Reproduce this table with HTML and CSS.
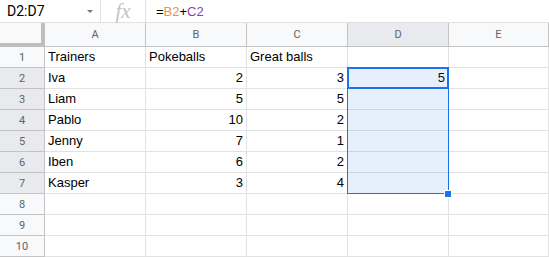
FILE: index.html
```html
<!DOCTYPE html>
<html>
<head>
<meta charset="utf-8">
<link rel="stylesheet" href="styles.css">
</head>
<body>
<div class="app">
  <div class="fbar">
    <div class="namebox"><span class="name">D2:D7</span><span class="caret"></span></div>
    <div class="sep"></div>
    <div class="fx">fx</div>
    <div class="sep"></div>
    <div class="formula">=<span class="ref1">B2</span>+<span class="ref2">C2</span></div>
  </div>
  <div class="sheet">
    <div class="corner"></div>
    <div class="ch">A</div><div class="ch">B</div><div class="ch">C</div><div class="ch sel">D</div><div class="ch">E</div>

    <div class="rh">1</div><div class="c">Trainers</div><div class="c">Pokeballs</div><div class="c">Great balls</div><div class="c"></div><div class="c"></div>
    <div class="rh sel">2</div><div class="c">Iva</div><div class="c n">2</div><div class="c n">3</div><div class="c n">5</div><div class="c"></div>
    <div class="rh sel">3</div><div class="c">Liam</div><div class="c n">5</div><div class="c n">5</div><div class="c"></div><div class="c"></div>
    <div class="rh sel">4</div><div class="c">Pablo</div><div class="c n">10</div><div class="c n">2</div><div class="c"></div><div class="c"></div>
    <div class="rh sel">5</div><div class="c">Jenny</div><div class="c n">7</div><div class="c n">1</div><div class="c"></div><div class="c"></div>
    <div class="rh sel">6</div><div class="c">Iben</div><div class="c n">6</div><div class="c n">2</div><div class="c"></div><div class="c"></div>
    <div class="rh sel">7</div><div class="c">Kasper</div><div class="c n">3</div><div class="c n">4</div><div class="c"></div><div class="c"></div>
    <div class="rh">8</div><div class="c"></div><div class="c"></div><div class="c"></div><div class="c"></div><div class="c"></div>
    <div class="rh">9</div><div class="c"></div><div class="c"></div><div class="c"></div><div class="c"></div><div class="c"></div>
    <div class="rh">10</div><div class="c"></div><div class="c"></div><div class="c"></div><div class="c"></div><div class="c"></div>

    <div class="range"></div>
    <div class="active"></div>
    <div class="handle"></div>
  </div>
</div>
</body>
</html>
```
FILE: styles.css
```css
html, body {
  margin: 0;
  padding: 0;
  background: #fff;
  overflow: hidden;
}
.app {
  width: 549px;
  height: 257px;
  font-family: "Liberation Sans", Arial, sans-serif;
  overflow: hidden;
}
.fbar {
  height: 22px;
  border-bottom: 1px solid #e1e1e1;
  display: flex;
  align-items: center;
  font-family: Roboto, "Liberation Sans", sans-serif;
  font-size: 14px;
  color: #000;
}
.namebox {
  width: 100px;
  box-sizing: border-box;
  padding-left: 7px;
  padding-right: 7px;
  display: flex;
  align-items: center;
  justify-content: space-between;
}
.caret {
  width: 0;
  height: 0;
  border-left: 3px solid transparent;
  border-right: 3px solid transparent;
  border-top: 3px solid #777;
  margin-top: 1px;
}
.sep {
  width: 1px;
  height: 22px;
  background: #e1e1e1;
}
.fx {
  width: 44px;
  height: 22px;
  display: flex;
  align-items: center;
  justify-content: center;
  font-family: "Liberation Serif", serif;
  font-style: italic;
  font-size: 21px;
  line-height: 1;
  color: #c4c4c4;
}
.formula {
  padding-left: 10px;
  font-family: "Liberation Sans", Arial, sans-serif;
  font-size: 13px;
}
.ref1 { color: #f0962d; }
.ref2 { color: #8e3fb2; }

.sheet {
  position: relative;
  display: grid;
  grid-template-columns: 45px 101px 101px 101px 101px 100px;
  grid-template-rows: 24px repeat(10, 21px);
}
.corner {
  background: #f8f9fa;
  border-right: 4px solid #bfbfbf;
  border-bottom: 4px solid #bfbfbf;
  box-sizing: border-box;
}
.ch {
  background: #f8f9fa;
  border-right: 1px solid #c4c4c4;
  border-bottom: 1px solid #c4c4c4;
  box-sizing: border-box;
  display: flex;
  align-items: center;
  justify-content: center;
  font-family: Roboto, "Liberation Sans", sans-serif;
  font-size: 11px;
  color: #5f6368;
}
.rh {
  background: #f8f9fa;
  border-right: 1px solid #c4c4c4;
  border-bottom: 1px solid #c4c4c4;
  box-sizing: border-box;
  display: flex;
  align-items: center;
  justify-content: center;
  font-family: Roboto, "Liberation Sans", sans-serif;
  font-size: 11px;
  color: #5f6368;
}
.ch.sel, .rh.sel {
  background: #e8eaed;
}
.c {
  border-right: 1px solid #e2e2e2;
  border-bottom: 1px solid #e2e2e2;
  box-sizing: border-box;
  font-size: 13px;
  color: #000;
  padding: 0 3px 3px 3px;
  display: flex;
  align-items: flex-end;
  white-space: nowrap;
  overflow: visible;
}
.c.n {
  justify-content: flex-end;
}
.range {
  position: absolute;
  left: 347px;
  top: 44px;
  width: 102px;
  height: 127px;
  box-sizing: border-box;
  border: 1px solid #1a73e8;
  background: rgba(26, 115, 232, 0.11);
}
.active {
  position: absolute;
  left: 347px;
  top: 44px;
  width: 102px;
  height: 22px;
  box-sizing: border-box;
  border: 2px solid #1a73e8;
}
.handle {
  position: absolute;
  left: 444px;
  top: 167px;
  width: 8px;
  height: 8px;
  box-sizing: border-box;
  background: #1a73e8;
  border: 1px solid #fff;
}
```
